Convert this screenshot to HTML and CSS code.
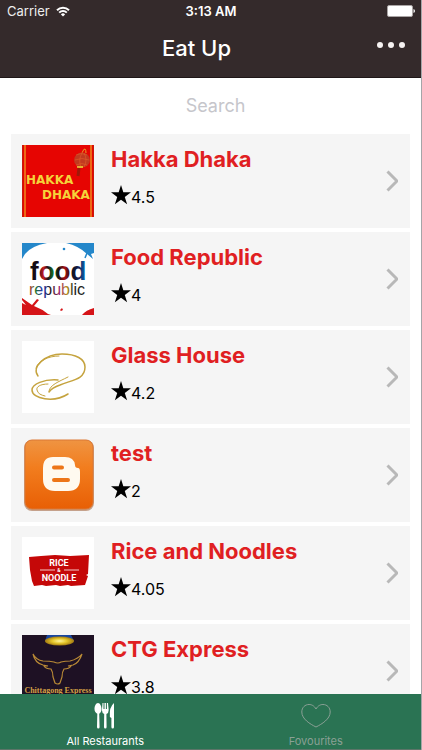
FILE: index.html
```
<!doctype html>
<html lang="en">

    <head>
        <meta charset="utf-8">
        <meta name="viewport" content="width=device-width, initial-scale=1">
        <title>Eat Up</title>
        <link rel="stylesheet" href="styles.css">
    </head>

    <body>

        <header class="header">
            <div class="status">
                <div class="carrier">
                    <span>Carrier</span>
                    <svg width="14" height="11" viewBox="0 0 14 11" fill="none" stroke="#fff" stroke-width="2">
                        <path d="M1 4.2a8.6 8.6 0 0 1 12 0M3.2 6.6a5.4 5.4 0 0 1 7.6 0"/>
                        <path d="M7 10.6L4.9 8.4a3 3 0 0 1 4.2 0z" fill="#fff" stroke="none"/>
                    </svg>
                </div>
                <div class="clock">3:13 AM</div>
                <div class="battery">
                    <svg width="28" height="12" viewBox="0 0 28 12">
                        <rect x=".5" y=".5" width="25" height="11" rx="1.5" fill="#fff" stroke="#aaa5a5"/>
                        <path d="M26.5 4q1.5.5 1.5 2t-1.5 2z" fill="#fff"/>
                    </svg>
                </div>
            </div>
            <div class="navbar">
                <h1 class="title">Eat Up</h1>
                <button class="more" type="button" aria-label="More">
                    <svg width="28" height="6" viewBox="0 0 28 6" fill="#f6f2f2">
                        <circle cx="3" cy="3" r="3"/>
                        <circle cx="14" cy="3" r="3"/>
                        <circle cx="25" cy="3" r="3"/>
                    </svg>
                </button>
            </div>
        </header>

        <main class="content">
            <input class="search" type="text" placeholder="Search" aria-label="Search">

            <a class="card" href="#hakka-dhaka">
                <svg class="logo" viewBox="0 0 72 72">
                    <rect width="72" height="72" fill="#e60502"/>
                    <path d="M.5 0v72M71.5 0v72" stroke="#c81a08"/>
                    <path d="M3 0v72M69 0v72" stroke="#f08a1c" stroke-width="1.5"/>
                    <path d="M60 8q2-5 3-4t1 4" stroke="#e8a028" fill="none"/>
                    <ellipse cx="60" cy="15" rx="8" ry="7.5" fill="#c23a20"/>
                    <path d="M54 10q5-3 11 0M53 15q7-3 14 0M54 20q6-3 11 0M60 8q-4 7-1 14M62 8q4 7 0 14" stroke="#e0602a" stroke-width=".6" fill="none"/>
                    <path d="M55 22h6" stroke="#e8b030" stroke-width="2"/>
                    <path d="M57 23l-1 8" stroke="#a01808" stroke-width="3"/>
                    <text class="hakka" x="4" y="39" font-size="12">HAKKA</text>
                    <text class="hakka" x="20" y="54" font-size="12">DHAKA</text>
                </svg>
                <div class="info">
                    <h2 class="name">Hakka Dhaka</h2>
                    <div class="rating"><svg class="star" viewBox="0 0 18 18"><path d="M9 0l2.1 6.6H18l-5.6 4.1 2.1 6.6L9 13.2l-5.5 4.1 2.1-6.6L0 6.6h6.9z"/></svg>4.5</div>
                </div>
                <svg class="arrow" viewBox="0 0 12 22"><path d="M1.5 1.5L11 11l-9.5 9.5"/></svg>
            </a>

            <a class="card" href="#food-republic">
                <svg class="logo" viewBox="0 0 72 72">
                    <defs>
                        <linearGradient id="foodInk">
                            <stop offset="0" stop-color="#111"/>
                            <stop offset=".14" stop-color="#170818"/>
                            <stop offset=".24" stop-color="#c61c20"/>
                            <stop offset=".32" stop-color="#191014"/>
                            <stop offset=".42" stop-color="#187a28"/>
                            <stop offset=".5" stop-color="#111"/>
                            <stop offset=".62" stop-color="#a80f16"/>
                            <stop offset=".72" stop-color="#111"/>
                            <stop offset=".88" stop-color="#13205a"/>
                            <stop offset="1" stop-color="#087ac8"/>
                        </linearGradient>
                        <linearGradient id="republicInk">
                            <stop offset="0" stop-color="#c33"/>
                            <stop offset=".12" stop-color="#24732c"/>
                            <stop offset=".24" stop-color="#2630b8"/>
                            <stop offset=".38" stop-color="#222"/>
                            <stop offset=".55" stop-color="#a02a72"/>
                            <stop offset=".68" stop-color="#b8901c"/>
                            <stop offset=".8" stop-color="#222"/>
                        </linearGradient>
                    </defs>
                    <rect width="72" height="72" fill="#fff"/>
                    <path d="M0 0h25Q9 3 3 11L0 16zM44 0h28v10l-3 1 2 5-6-5Q57 3 44 0z" fill="#2487ca"/>
                    <path d="M65 10l-2 5" stroke="#2487ca" stroke-width="1.5"/>
                    <circle cx="42" cy="6" r="1.3" fill="#2487ca"/>
                    <path d="M0 55l10 7 5-6 2 1-5 6q8 3 14 8l3 1H0V60l4 2-4-5zM60 72q4-5 12-7v7z" fill="#d51418"/>
                    <path d="M38 67l2-2 1 2-2 1z" fill="#d51418"/>
                    <text class="food" x="8" y="37" font-size="26" fill="url(#foodInk)">food</text>
                    <text class="republic" x="7" y="52" font-size="16" fill="url(#republicInk)">republic</text>
                </svg>
                <div class="info">
                    <h2 class="name">Food Republic</h2>
                    <div class="rating"><svg class="star" viewBox="0 0 18 18"><path d="M9 0l2.1 6.6H18l-5.6 4.1 2.1 6.6L9 13.2l-5.5 4.1 2.1-6.6L0 6.6h6.9z"/></svg>4</div>
                </div>
                <svg class="arrow" viewBox="0 0 12 22"><path d="M1.5 1.5L11 11l-9.5 9.5"/></svg>
            </a>

            <a class="card" href="#glass-house">
                <svg class="logo" viewBox="0 0 72 72">
                    <rect width="72" height="72" fill="#fff"/>
                    <g fill="none" stroke="#c5a33e" stroke-linecap="round">
                        <path d="M16 35C9 26 23 13 40 13c14 0 23 5 23 13C63 39 49 39 38 44c-6 2-9 4-11 7" stroke-width="1.500"/>
                        <path d="M14 27c2-7 12-12 23-12M27 50c1-6 9-9 19-14"/>
                        <path d="M36 39C22 38 10 43 10 49c0 9 22 13 36 4" stroke-width="1.500"/>
                        <path d="M26 43c-8 0-12 3-11 6 1 4 4 5 8 6"/>
                    </g>
                </svg>
                <div class="info">
                    <h2 class="name">Glass House</h2>
                    <div class="rating"><svg class="star" viewBox="0 0 18 18"><path d="M9 0l2.1 6.6H18l-5.6 4.1 2.1 6.6L9 13.2l-5.5 4.1 2.1-6.6L0 6.6h6.9z"/></svg>4.2</div>
                </div>
                <svg class="arrow" viewBox="0 0 12 22"><path d="M1.5 1.5L11 11l-9.5 9.5"/></svg>
            </a>

            <a class="card" href="#test">
                <svg class="logo" viewBox="0 0 72 72">
                    <defs>
                        <linearGradient id="orange" x2="0" y2="1">
                            <stop offset="0" stop-color="#ef9442"/>
                            <stop offset=".4" stop-color="#f27d1e"/>
                            <stop offset="1" stop-color="#e85f05"/>
                        </linearGradient>
                    </defs>
                    <rect x="2" y="1" width="70" height="71" rx="8" fill="#c5a18b"/>
                    <rect x="3" y="1" width="68" height="69" rx="7" fill="url(#orange)" stroke="#dc7834"/>
                    <path d="M31 18h12q9 0 10 8 0 3 3 3 2 0 2 4v7q0 12-12 12H33q-12 0-12-12V29q0-11 10-11z" fill="#fffaf0"/>
                    <path d="M32 28.5h8M32 41h14" stroke="#ed7618" stroke-width="4" stroke-linecap="round"/>
                </svg>
                <div class="info">
                    <h2 class="name">test</h2>
                    <div class="rating"><svg class="star" viewBox="0 0 18 18"><path d="M9 0l2.1 6.6H18l-5.6 4.1 2.1 6.6L9 13.2l-5.5 4.1 2.1-6.6L0 6.6h6.9z"/></svg>2</div>
                </div>
                <svg class="arrow" viewBox="0 0 12 22"><path d="M1.5 1.5L11 11l-9.5 9.5"/></svg>
            </a>

            <a class="card" href="#rice-and-noodles">
                <svg class="logo" viewBox="0 0 72 72">
                    <rect width="72" height="72" fill="#fff"/>
                    <path d="M7 20l12-1 14-1 15 1 19-1-1 19-2 1 2 1-3 9-14 1-3-1-8 1-4-1-10 1-4-1-8 1-2-5-2-11z" fill="#c50808"/>
                    <text class="noodle" x="37" y="29" font-size="9">RICE</text>
                    <path d="M18 33h15M42 33h15" stroke="#f4caca"/>
                    <text class="noodle" x="37" y="35" font-size="5">&amp;</text>
                    <text class="noodle" x="37" y="44" font-size="9">NOODLE</text>
                </svg>
                <div class="info">
                    <h2 class="name">Rice and Noodles</h2>
                    <div class="rating"><svg class="star" viewBox="0 0 18 18"><path d="M9 0l2.1 6.6H18l-5.6 4.1 2.1 6.6L9 13.2l-5.5 4.1 2.1-6.6L0 6.6h6.9z"/></svg>4.05</div>
                </div>
                <svg class="arrow" viewBox="0 0 12 22"><path d="M1.5 1.5L11 11l-9.5 9.5"/></svg>
            </a>

            <a class="card" href="#ctg-express">
                <svg class="logo" viewBox="0 0 72 72">
                    <defs>
                        <radialGradient id="lamp">
                            <stop offset="0" stop-color="#fff5a0"/>
                            <stop offset=".5" stop-color="#e6c82c"/>
                            <stop offset="1" stop-color="#a37b12"/>
                        </radialGradient>
                    </defs>
                    <rect width="72" height="72" fill="#1e1124"/>
                    <path d="M25 0h24l3 6H23z" fill="#1746a0"/>
                    <ellipse cx="37.5" cy="6" rx="14.5" ry="4.5" fill="url(#lamp)"/>
                    <path d="M11 19Q14 25 21 26q7 0 11 1 4 2 7 0 4-1 9-1 8-2 12-7-3 9-9 11l-5 1h3q-2 3-7 3-2 3-2 8l-2 6q-2 2-5 0l-2-6q0-5-2-8-5 0-7-3h4l-5-1Q13 28 11 19z" fill="none" stroke="#b98a36" stroke-width="1.200"/>
                    <text class="ctg" x="36" y="58" font-size="8">Chittagong Express</text>
                </svg>
                <div class="info">
                    <h2 class="name">CTG Express</h2>
                    <div class="rating"><svg class="star" viewBox="0 0 18 18"><path d="M9 0l2.1 6.6H18l-5.6 4.1 2.1 6.6L9 13.2l-5.5 4.1 2.1-6.6L0 6.6h6.9z"/></svg>3.8</div>
                </div>
                <svg class="arrow" viewBox="0 0 12 22"><path d="M1.5 1.5L11 11l-9.5 9.5"/></svg>
            </a>
        </main>

        <nav class="tabs">
            <a class="tab active" href="#all">
                <svg width="22" height="26" viewBox="0 0 22 26" fill="#fff">
                    <path d="M4 0c2 0 3.5 3 3.5 6 0 2.5-1 4-2.3 4.8L5.6 24q0 1.5-1.3 1.5T3 24l.3-13.2C1.8 10 .5 8.5.5 6 .5 3 2 0 4 0z"/>
                    <path d="M8.5 0h1v6h1V0h1.4v6h1V0H14l.7 7q0 3-2.3 4l.2 13q0 1.500-1.300 1.500T10 24l.2-13Q8 10 7.900 7z"/>
                    <path d="M20 0v24q0 1.500-1.300 1.500T17.400 24v-9l-1.500-1Q15 4 20 0z"/>
                </svg>
                <span>All Restaurants</span>
            </a>
            <a class="tab" href="#favourites">
                <svg width="30" height="26" viewBox="0 0 30 26" fill="none" stroke="#8aa095" stroke-width="1">
                    <path d="M15 6C13 2.5 10.5 1.5 8 1.5 4 1.5.8 4.5.8 9 .8 16 9 21 15 24c6-3 14.2-8 14.2-15 0-4.5-3.2-7.500-7.200-7.500-2.500 0-5 1-7 4.500z"/>
                </svg>
                <span>Fovourites</span>
            </a>
        </nav>

    </body>

</html>
```
FILE: styles.css
```
* {
    box-sizing: border-box;
}

body {
    margin: 0;
    height: 100vh;
    display: flex;
    flex-direction: column;
    font-family: Inter, "Liberation Sans", sans-serif;
    background: #fff;
    border-right: 1px solid #a5a5a8;
}

.header {
    background: #342a2b;
    color: #fff;
    border-bottom: 1px solid #1f1718;
}

.status {
    display: grid;
    grid-template-columns: 1fr auto 1fr;
    align-items: center;
    height: 22px;
    padding: 0 6px 0 7px;
    font-size: 13px;
}

.carrier {
    display: flex;
    align-items: center;
    gap: 6px;
    color: #eee;
}

.clock {
    font-weight: 600;
}

.battery {
    display: flex;
    justify-content: flex-end;
}

.navbar {
    display: grid;
    grid-template-columns: 1fr auto 1fr;
    align-items: center;
    height: 55px;
    padding: 0 16px;
}

/* the title is centred in what the menu button leaves free */
.title {
    grid-column: 2;
    margin: 0;
    padding: 0 28px 4px 0;
    font-size: 22px;
    font-weight: 500;
    line-height: 28px;
}

.more {
    justify-self: end;
    display: flex;
    padding: 4px 0 14px;
    border: 0;
    background: none;
}

.content {
    flex: 1;
    min-height: 0;
    overflow: hidden;
    display: flex;
    flex-direction: column;
    gap: 4px;
    padding: 0 11px;
}

.search {
    flex: none;
    width: 100%;
    height: 52px;
    padding: 2px 0 0 10px;
    border: 0;
    outline: 0;
    background: none;
    font-family: inherit;
    font-size: 18px;
    text-align: center;
}

.search::placeholder {
    color: #c6c6cb;
}

.card {
    flex: none;
    display: flex;
    align-items: center;
    height: 94px;
    padding: 0 12px 0 11px;
    background: #f5f5f5;
    color: #000;
    text-decoration: none;
}

.logo {
    flex: none;
    width: 72px;
    height: 72px;
}

.info {
    flex: 1;
    align-self: flex-start;
    padding: 11px 0 0 17px;
}

.name {
    margin: 0;
    color: #e01f22;
    font-size: 22px;
    font-weight: 700;
    line-height: 28px;
}

.rating {
    display: flex;
    align-items: center;
    margin-top: 12px;
    font-size: 16px;
    line-height: 24px;
}

.star {
    width: 20px;
    height: 20px;
    margin-top: -4px;
}

.arrow {
    width: 12px;
    height: 22px;
    fill: none;
    stroke: #b8b8b8;
    stroke-width: 3;
}

.tabs {
    display: flex;
    height: 56px;
    background: #2a7353;
    border-bottom: 1px solid #5d7569;
}

.tab {
    flex: 1;
    display: flex;
    flex-direction: column;
    align-items: center;
    gap: 5px;
    padding-top: 9px;
    color: #8aa095;
    font-size: 11px;
    line-height: 15px;
    text-decoration: none;
}

.active {
    color: #fff;
}

/* lettering inside the logos */
.hakka {
    font-family: "DejaVu Sans", sans-serif;
    font-weight: bold;
    fill: #f5d33a;
}

.food {
    font-family: "Liberation Sans", sans-serif;
    font-weight: bold;
}

.republic {
    font-family: "Liberation Sans", sans-serif;
}

.noodle {
    font-family: Roboto, sans-serif;
    font-weight: bold;
    fill: #fff;
    text-anchor: middle;
}

.ctg {
    font-family: "Liberation Serif", serif;
    font-weight: bold;
    fill: #d4a044;
    text-anchor: middle;
}
```
